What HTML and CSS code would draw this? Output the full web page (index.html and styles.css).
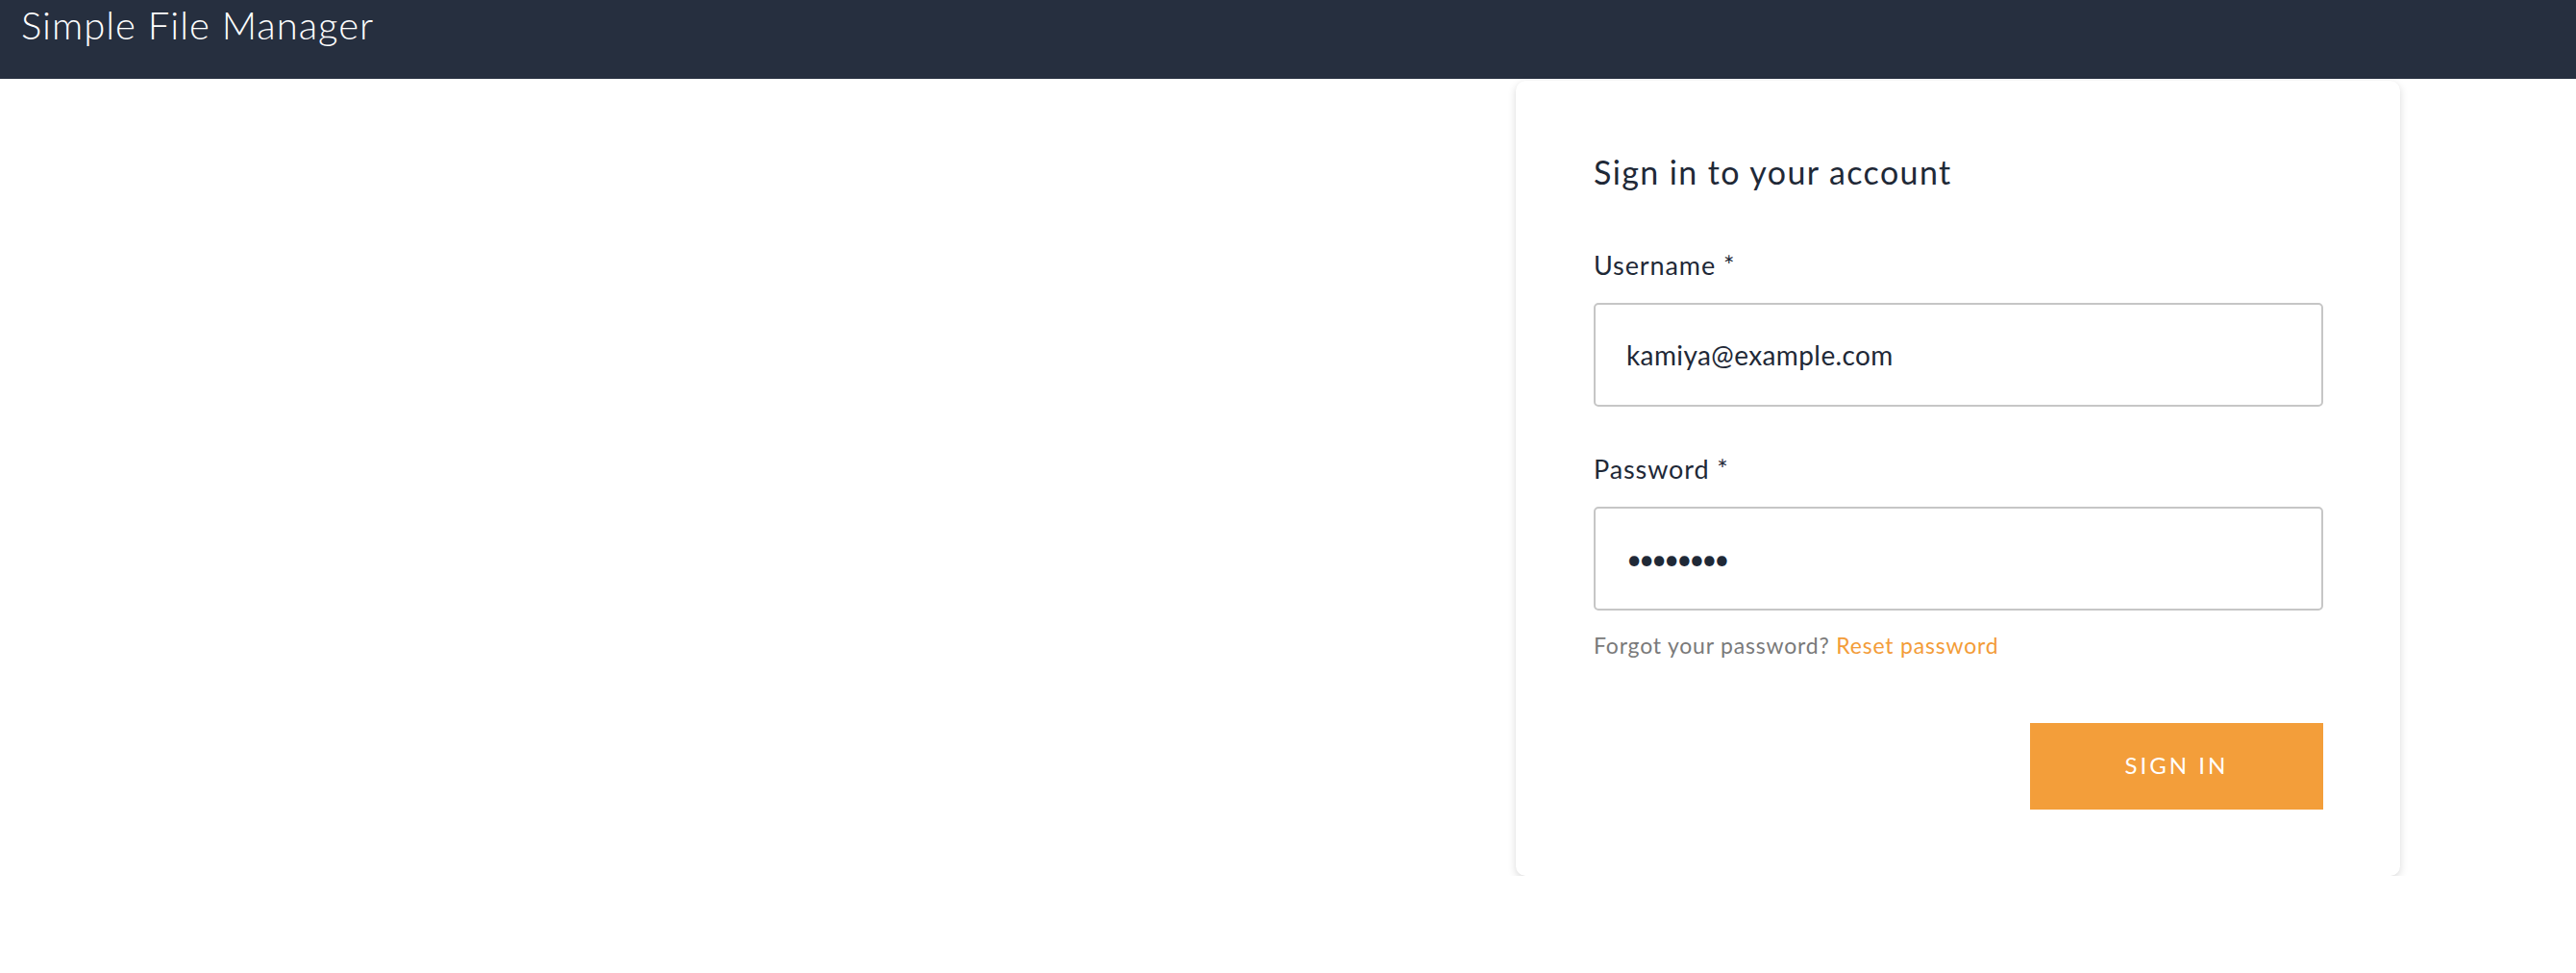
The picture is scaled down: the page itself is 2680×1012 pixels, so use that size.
FILE: index.html
```html
<!DOCTYPE html>
<html lang="en">
<head>
<meta charset="utf-8">
<title>Simple File Manager</title>
<link rel="stylesheet" href="styles.css">
</head>
<body>
<header class="topbar">
  <div class="brand">Simple File Manager</div>
</header>
<main class="page">
  <section class="card">
    <h1 class="card-title">Sign in to your account</h1>
    <form class="form">
      <label class="field-label" for="username">Username *</label>
      <input class="field-input" id="username" type="text" value="kamiya@example.com">
      <label class="field-label gap" for="password">Password *</label>
      <input class="field-input password" id="password" type="password" value="password">
      <p class="hint">Forgot your password? <a class="link" href="#">Reset password</a></p>
      <div class="actions">
        <button class="btn" type="button">SIGN IN</button>
      </div>
    </form>
  </section>
</main>
</body>
</html>
```
FILE: styles.css
```css
* { box-sizing: border-box; }
html, body {
  margin: 0;
  padding: 0;
  background: #ffffff;
  font-family: Lato, "Open Sans", "Liberation Sans", sans-serif;
}
.topbar {
  height: 82px;
  background: #262f3f;
  padding: 2px 0 0 22px;
}
.brand {
  color: #ffffff;
  font-size: 40px;
  line-height: 48px;
  font-weight: 300;
  letter-spacing: 1px;
}
.page {
  display: flex;
  justify-content: flex-end;
  padding: 2px 183px 0 0;
}
.card {
  width: 920px;
  background: #ffffff;
  border-radius: 10px;
  box-shadow: 0 3px 8px rgba(0, 0, 0, 0.15), 0 0 1px rgba(0, 0, 0, 0.04);
  padding: 75px 80px 69px 81px;
}
.card-title {
  margin: 0;
  font-size: 34px;
  line-height: 40px;
  font-weight: 400;
  letter-spacing: 1.4px;
  color: #1f2937;
}
.form {
  display: flex;
  flex-direction: column;
  margin-top: 61px;
}
.field-label {
  font-size: 27px;
  line-height: 32px;
  color: #1f2937;
  font-weight: 400;
  letter-spacing: 0.9px;
}
.field-label.gap { margin-top: 49px; }
.field-input {
  margin-top: 23px;
  height: 108px;
  border: 2px solid #c6c6c6;
  border-radius: 5px;
  padding: 0 32px;
  font-family: Lato, "Open Sans", "Liberation Sans", sans-serif;
  font-size: 28px;
  letter-spacing: 0.4px;
  color: #1f2937;
  background: #ffffff;
  outline: none;
}
.field-input.password {
  font-size: 28px;
  letter-spacing: -3.2px;
}
.hint {
  margin: 22px 0 0 0;
  font-size: 23px;
  line-height: 28px;
  letter-spacing: 0.8px;
  color: #7a7a7a;
}
.link {
  color: #f39c38;
  text-decoration: none;
}
.actions {
  display: flex;
  justify-content: flex-end;
  margin-top: 67px;
}
.btn {
  width: 305px;
  height: 90px;
  border: none;
  border-radius: 0;
  background: #f39e3a;
  color: #ffffff;
  font-family: Lato, "Open Sans", "Liberation Sans", sans-serif;
  font-size: 24px;
  font-weight: 400;
  letter-spacing: 3px;
  padding: 0 0 4px 0;
}
```
